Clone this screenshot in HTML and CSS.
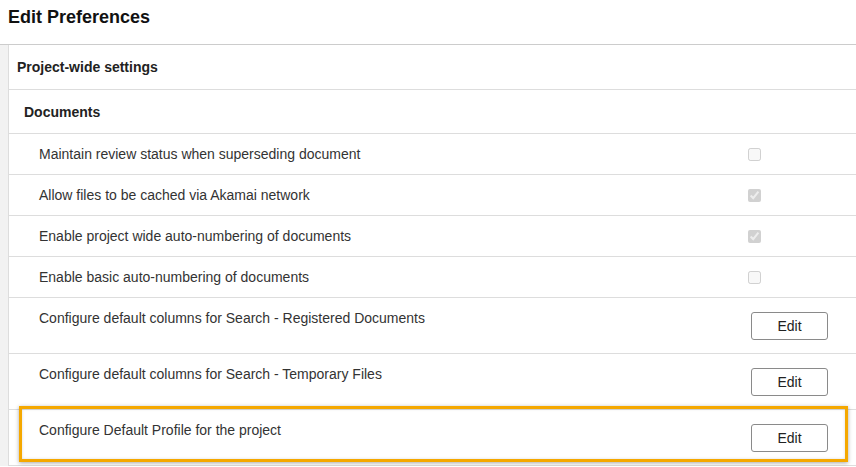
FILE: index.html
```html
<!DOCTYPE html>
<html lang="en">
<head>
    <meta charset="UTF-8">
    <meta name="viewport" content="width=device-width, initial-scale=1.0">
    <title>Edit Preferences</title>
    <link rel="stylesheet" href="styles.css">
</head>
<body>
    <h1>Edit Preferences</h1>
    <div class="settings">
        <div class="rail"></div>
        <div class="panel">
            <div class="group-title">Project-wide settings</div>
            <div class="section-title">Documents</div>

            <div class="row">
                <span class="label">Maintain review status when superseding document</span>
                <span class="control"><input type="checkbox" disabled></span>
            </div>
            <div class="row">
                <span class="label">Allow files to be cached via Akamai network</span>
                <span class="control"><input type="checkbox" checked disabled></span>
            </div>
            <div class="row">
                <span class="label">Enable project wide auto-numbering of documents</span>
                <span class="control"><input type="checkbox" checked disabled></span>
            </div>
            <div class="row">
                <span class="label">Enable basic auto-numbering of documents</span>
                <span class="control"><input type="checkbox" disabled></span>
            </div>

            <div class="row row-edit">
                <span class="label">Configure default columns for Search - Registered Documents</span>
                <span class="control"><button class="btn">Edit</button></span>
            </div>
            <div class="row row-edit">
                <span class="label">Configure default columns for Search - Temporary Files</span>
                <span class="control"><button class="btn">Edit</button></span>
            </div>
            <div class="row row-edit highlighted">
                <span class="label">Configure Default Profile for the project</span>
                <span class="control"><button class="btn">Edit</button></span>
                <div class="highlight"></div>
            </div>
        </div>
    </div>
</body>
</html>
```

FILE: styles.css
```css
body {
    margin: 0;
    background: #fff;
    color: #333;
    font-family: "Liberation Sans", Arial, sans-serif;
    font-size: 14px;
}
h1 {
    margin: 0;
    padding: 7px 8px 16px;
    font-size: 18px;
    line-height: 21px;
    font-weight: bold;
    color: #111;
    border-bottom: 1px solid #ccc;
}
.settings {
    display: flex;
}
.rail {
    width: 8px;
    background: #f2f2f2;
    border-right: 1px solid #ddd;
}
.panel {
    flex: 1;
}
.group-title,
.section-title {
    display: flex;
    align-items: center;
    font-size: 14px;
    font-weight: bold;
    color: #222;
    border-bottom: 1px solid #ddd;
}
.group-title {
    height: 44px;
    padding-left: 8px;
}
.section-title {
    height: 43px;
    padding-left: 15px;
}
.row {
    display: flex;
    align-items: center;
    height: 40px;
    padding-left: 30px;
    border-bottom: 1px solid #ddd;
}
.label {
    flex: 1;
    line-height: 16px;
}
.control {
    width: 112px;
    display: flex;
}
.control input {
    width: 13px;
    height: 13px;
    margin: 0 0 0 4px;
}
.row-edit {
    height: auto;
    align-items: flex-start;
    padding-top: 12px;
    padding-bottom: 13px;
}
.btn {
    margin: 2px 0 0 7px;
    width: 77px;
    height: 28px;
    background: #fff;
    border: 1px solid #8a8a8a;
    border-radius: 3px;
    font-family: "Liberation Sans", Arial, sans-serif;
    font-size: 14px;
    color: #222;
}
.highlighted {
    position: relative;
}
.highlight {
    position: absolute;
    top: -4px;
    left: 10px;
    right: 8px;
    height: 50px;
    border: 3px solid #f5a800;
    box-shadow: 0 1px 4px rgba(0, 0, 0, 0.35), inset 0 0 3px rgba(0, 0, 0, 0.15);
    pointer-events: none;
}
```
